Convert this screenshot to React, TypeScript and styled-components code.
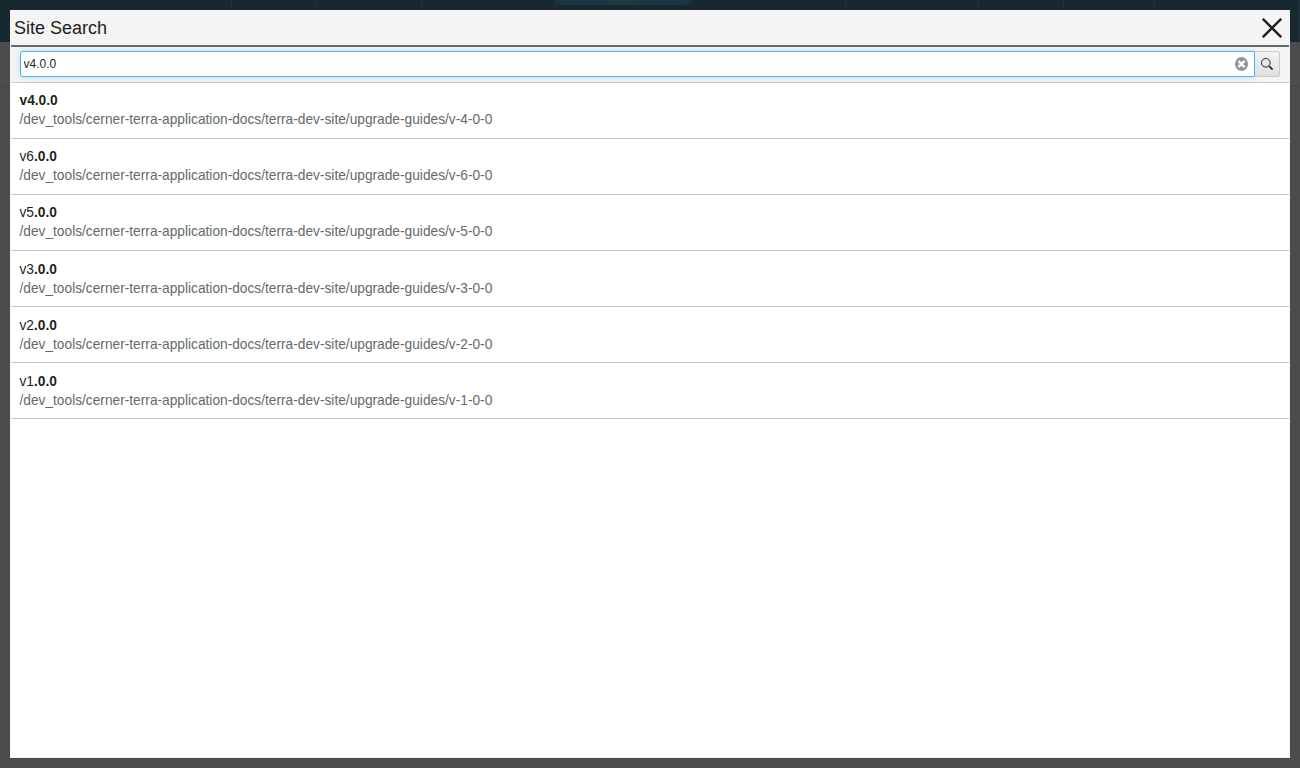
import React, { useState } from 'react';
import styled, { createGlobalStyle } from 'styled-components';

const GlobalStyle = createGlobalStyle`
  * { box-sizing: border-box; }
  html, body, #root { height: 100%; }
  body {
    margin: 0;
    overflow: hidden;
    background: #4b4c4d;
    color: #1c1f21;
    font-family: "Liberation Sans", Arial, sans-serif;
    font-size: 13.72px;
  }
`;

const Page = styled.div`
  height: 100%;
`;

const NavBar = styled.div`
  display: flex;
  height: 42px;
  background: #182830;
`;

const NavTab = styled.div<{ $width: number; $active?: boolean }>`
  width: ${(p) => p.$width}px;
  height: 100%;
  border-right: 1px solid #1f323b;
  background: ${(p) =>
    p.$active
      ? 'linear-gradient(to right, #1a3341, #223843 50%, #1a3341) 0 0 / calc(100% - 1px) 5px no-repeat, #182630'
      : 'transparent'};
  background-clip: padding-box;
`;

const SubHeader = styled.div`
  height: 45px;
  border-bottom: 1px solid #424445;
`;

const Modal = styled.section`
  position: fixed;
  inset: 10px;
  display: flex;
  flex-direction: column;
  border: 1px solid #f4f4f4;
  background: #fff;
`;

const Header = styled.header`
  display: flex;
  flex: none;
  align-items: center;
  justify-content: space-between;
  height: 36px;
  padding: 0 7px 0 3px;
  border-bottom: 2px solid #64696c;
  background: #f4f4f4;
`;

const Title = styled.h1`
  margin: 0;
  font-size: 18px;
  font-weight: 400;
  line-height: 22px;
`;

const CloseButton = styled.button`
  display: flex;
  padding: 0;
  border: 0;
  background: none;
  color: #1c1f21;
`;

const SearchBar = styled.div`
  display: flex;
  flex: none;
  height: 36px;
  padding: 4px 9px 5px;
  border-bottom: 1px solid #c8cacb;
  background: #f4f4f4;
`;

const Field = styled.div`
  display: flex;
  flex: 1;
  align-items: center;
  padding: 0 6px 0 2.5px;
  border: 1px solid #4cb2e9;
  border-radius: 3px 0 0 3px;
  background: #fff;
  box-shadow: 0 0 5px rgba(76, 178, 233, 0.35);
`;

const Input = styled.input`
  flex: 1;
  min-width: 0;
  height: 24px;
  padding: 0;
  border: 0;
  outline: 0;
  background: none;
  color: #1c1f21;
  font-family: inherit;
  font-size: 12px;
`;

const ClearButton = styled(CloseButton)`
  color: #909496;
`;

const SearchButton = styled.button`
  display: flex;
  align-items: center;
  justify-content: center;
  width: 25px;
  padding: 0 1px 0 0;
  border: 1px solid #c8cacb;
  border-left: 0;
  border-radius: 0 3px 3px 0;
  background: linear-gradient(#f4f4f4, #dedfe0);
  color: #1c1f21;
`;

const Results = styled.ul`
  margin: 0;
  padding: 0;
  list-style: none;
`;

const Result = styled.li`
  height: 56.07px;
  padding: 8.32px 9px 0 8.5px;
  border-bottom: 1px solid #c8cacb;
  line-height: 19px;
`;

const Path = styled.div`
  color: #64696c;
`;

const tabs = [232, 84, 106, 134, 137, 153, 133, 85, 91, 145];

const results = [
  { plain: '', match: 'v4.0.0', version: 4 },
  { plain: 'v6', match: '.0.0', version: 6 },
  { plain: 'v5', match: '.0.0', version: 5 },
  { plain: 'v3', match: '.0.0', version: 3 },
  { plain: 'v2', match: '.0.0', version: 2 },
  { plain: 'v1', match: '.0.0', version: 1 },
];

export default function App() {
  const [query, setQuery] = useState('v4.0.0');

  return (
    <>
      <GlobalStyle />
      <Page>
        <NavBar>
          {tabs.map((width, i) => (
            <NavTab key={i} $width={width} $active={i === 4} />
          ))}
        </NavBar>
        <SubHeader />
      </Page>
      <Modal role="dialog" aria-label="Site Search">
        <Header>
          <Title>Site Search</Title>
          <CloseButton aria-label="Close">
            <svg width="20" height="20" viewBox="0 0 20 20" fill="none" stroke="currentColor" strokeWidth="2.4">
              <path d="M.8.8l18.4 18.4M19.2.8L.8 19.2" />
            </svg>
          </CloseButton>
        </Header>
        <SearchBar>
          <Field>
            <Input aria-label="Search" value={query} onChange={(e) => setQuery(e.target.value)} />
            <ClearButton aria-label="Clear" onClick={() => setQuery('')}>
              <svg width="13" height="14" viewBox="0 0 13 14">
                <ellipse cx="6.5" cy="7" rx="6.5" ry="6.9" fill="currentColor" />
                <path d="M3.4 3.9l6.2 6.2M9.6 3.9l-6.2 6.2" stroke="#fff" strokeWidth="2.2" />
              </svg>
            </ClearButton>
          </Field>
          <SearchButton aria-label="Submit search">
            <svg width="12" height="12" viewBox="0 0 12 12" fill="none" stroke="currentColor">
              <circle cx="4.8" cy="4.8" r="4.3" strokeWidth="1" />
              <path d="M7.8 7.8l1 1" strokeWidth="1" />
              <path d="M8.4 8.4l3.2 3.2" strokeWidth="1.6" />
            </svg>
          </SearchButton>
        </SearchBar>
        <Results>
          {results.map((r) => (
            <Result key={r.version}>
              <div>
                {r.plain}
                <b>{r.match}</b>
              </div>
              <Path>/dev_tools/cerner-terra-application-docs/terra-dev-site/upgrade-guides/v-{r.version}-0-0</Path>
            </Result>
          ))}
        </Results>
      </Modal>
    </>
  );
}
